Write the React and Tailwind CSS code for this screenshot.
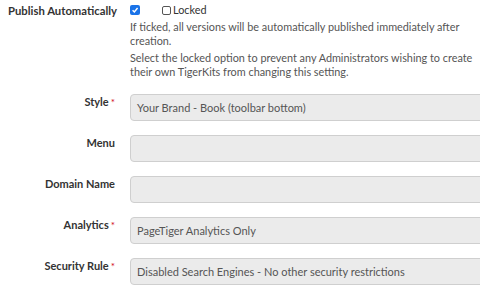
import React from 'react'

const rows = [
  { label: 'Style', required: true, value: 'Your Brand - Book (toolbar bottom)' },
  { label: 'Menu', required: false, value: '' },
  { label: 'Domain Name', required: false, value: '' },
  { label: 'Analytics', required: true, value: 'PageTiger Analytics Only' },
  { label: 'Security Rule', required: true, value: 'Disabled Search Engines - No other security restrictions' },
]

function Row({ label, required, value }) {
  return (
    <div className="flex gap-[15px]">
      <div className="w-[115px] shrink-0 text-right pt-[1px] text-[11px] leading-[14px] font-bold text-[#333]">
        {label}
        {required && <span className="text-[#d0021b] font-normal text-[10px] align-top ml-[2px]">*</span>}
      </div>
      <div className="w-[400px] shrink-0 h-[27px] bg-[#ebebeb] border border-[#cfcfcf] rounded-[4px] flex items-center px-[6px] pt-[1px] text-[11px] text-[#555]">
        {value}
      </div>
    </div>
  )
}

export default function App() {
  return (
    <div className="w-[480px] h-[288px] overflow-hidden bg-white" style={{ fontFamily: 'Lato, "Open Sans", sans-serif' }}>
      <div className="flex gap-[15px] pt-[3px]">
        <div className="w-[115px] shrink-0 pl-[8px] text-[11.3px] leading-[14px] font-bold text-[#333] whitespace-nowrap pt-[1px]">
          Publish Automatically
        </div>
        <div className="flex-1 text-[10.85px] leading-[14px] text-[#555]">
          <div className="flex items-center h-[14px]">
            <span className="w-[10px] h-[10px] rounded-[2px] bg-[#1a73e8] flex items-center justify-center">
              <svg width="8" height="8" viewBox="0 0 10 10">
                <path d="M2 5.2 L4.2 7.4 L8.2 2.6" stroke="white" strokeWidth="1.8" fill="none" />
              </svg>
            </span>
            <span className="ml-[22px] w-[9px] h-[9px] border border-[#555] rounded-[2px] bg-white"></span>
            <span className="ml-[2px] text-[#333]">Locked</span>
          </div>
          <p className="mt-[3px]">If ticked, all versions will be automatically published immediately after creation.</p>
          <p className="mt-[3px]">Select the locked option to prevent any Administrators wishing to create their own TigerKits from changing this setting.</p>
        </div>
      </div>
      <div className="flex flex-col gap-[14px] mt-[15px]">
        {rows.map((r) => (
          <Row key={r.label} {...r} />
        ))}
      </div>
    </div>
  )
}
